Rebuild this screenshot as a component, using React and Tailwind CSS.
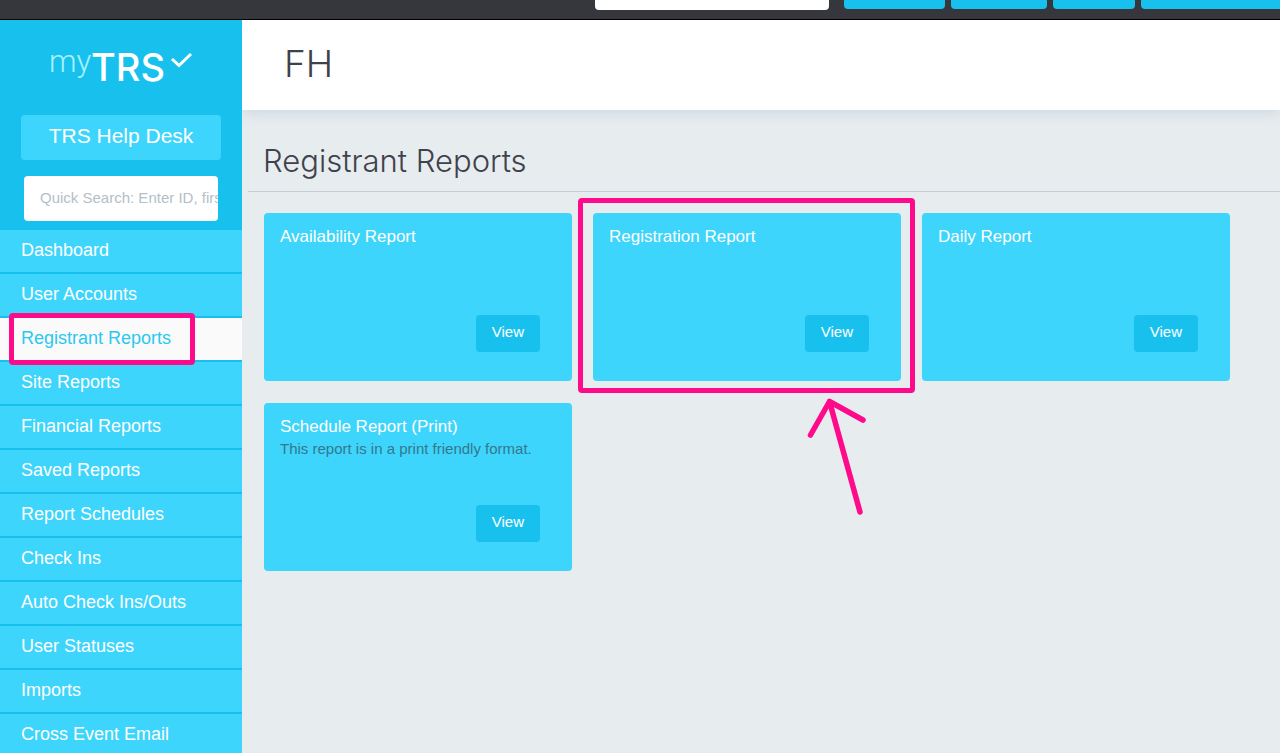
import React, { useState } from 'react';

const navItems = [
  'Dashboard',
  'User Accounts',
  'Registrant Reports',
  'Site Reports',
  'Financial Reports',
  'Saved Reports',
  'Report Schedules',
  'Check Ins',
  'Auto Check Ins/Outs',
  'User Statuses',
  'Imports',
  'Cross Event Email',
];

const reports = [
  { title: 'Availability Report' },
  { title: 'Registration Report', highlight: true },
  { title: 'Daily Report' },
  { title: 'Schedule Report (Print)', note: 'This report is in a print friendly format.' },
];

const Logo = () => (
  <svg width="150" height="60" viewBox="-2 -10 150 60" className="block" role="img" aria-label="myTRS">
    <text x="0" y="26" fill="#a9f0ff" fontSize="31" fontWeight="300" fontFamily="Roboto, sans-serif">my</text>
    <text x="42" y="35" fill="#fff" fontSize="38" fontWeight="500" fontFamily="Inter, sans-serif">TRS</text>
    <path d="M123 13 L130 19.5 L142 8" fill="none" stroke="#fff" strokeWidth="3" />
  </svg>
);

const TopBar = () => (
  <header className="flex h-5 shrink-0 items-start justify-end border-b border-black bg-[#36363d]">
    <input type="text" aria-label="Search" className="mr-[15px] h-[10px] w-[234px] rounded-b bg-white outline-none" />
    <div className="flex gap-1.5">
      <button type="button" aria-label="Events" className="h-[9px] w-[101px] rounded-b bg-[#18c1ed]" />
      <button type="button" aria-label="Reports" className="h-[9px] w-24 rounded-b bg-[#18c1ed]" />
      <button type="button" aria-label="Help" className="h-[9px] w-[82px] rounded-b bg-[#18c1ed]" />
      <button type="button" aria-label="Account" className="h-[9px] w-[139px] rounded-bl bg-[#18c1ed]" />
    </div>
  </header>
);

const Sidebar = ({ active, onSelect }) => (
  <aside className="w-[242px] shrink-0 overflow-hidden bg-[#18c1ed]">
    <div className="flex h-[210px] flex-col px-[21px] pt-4">
      <div className="ml-[26px]">
        <Logo />
      </div>
      <button type="button" className="mt-[19px] h-[45px] shrink-0 rounded bg-[#3dd5fb] pb-1 text-[21px] text-white">
        TRS Help Desk
      </button>
      <input
        type="text"
        aria-label="Quick Search"
        placeholder="Quick Search: Enter ID, first or last name"
        className="mx-[3px] mt-4 h-[45px] shrink-0 rounded bg-white pb-0.5 pl-4 text-[15px] text-gray-700 outline-none placeholder:text-[#b3c0c8]"
      />
    </div>
    <nav>
      <ul>
        {navItems.map(item => (
          <li key={item} className="relative">
            <a
              href="#"
              onClick={e => { e.preventDefault(); onSelect(item); }}
              className={`flex h-11 items-center border-b-2 border-[#18c1ed] pl-[21px] pb-0.5 text-lg ${
                item === active ? 'bg-[#fafafa] text-[#2bc8f0]' : 'bg-[#3dd5fb] text-white'
              }`}
            >
              {item}
            </a>
            {item === 'Registrant Reports' && (
              <div className="pointer-events-none absolute -top-[5px] left-[9px] z-10 h-[52px] w-[186px] rounded-sm border-[5px] border-[#ff0a8a]" />
            )}
          </li>
        ))}
      </ul>
    </nav>
  </aside>
);

const ReportCard = ({ title, note, highlight }) => (
  <article className="relative flex min-h-[168px] flex-col rounded bg-[#3dd5fb] px-4 pt-3 pb-[29px]">
    <h3 className="text-[17px] leading-6 text-white">{title}</h3>
    {note && <p className="text-[15px] leading-5 text-[#34788d]">{note}</p>}
    <button type="button" className="mt-auto mr-4 h-[37px] self-end rounded bg-[#18c1ed] px-4 pb-0.5 text-[15px] text-white">
      View
    </button>
    {highlight && (
      <>
        <div className="pointer-events-none absolute -top-[15px] -right-[14px] -bottom-3 -left-[15px] rounded-sm border-[5px] border-[#ff0a8a]" />
        <svg
          width="64" height="124" viewBox="0 0 64 124"
          className="pointer-events-none absolute top-[182px] left-[212px]"
          fill="none" stroke="#ff0a8a" strokeWidth="5.5" strokeLinecap="round" strokeLinejoin="round" aria-hidden="true"
        >
          <path d="M5.5 40 L24.5 6.5 L58 25 M24.5 6.5 L55 117" />
        </svg>
      </>
    )}
  </article>
);

const App = () => {
  const [active, setActive] = useState('Registrant Reports');

  return (
    <div className="flex h-screen flex-col overflow-hidden bg-[#e7ecef] font-['Liberation_Sans',Arial,sans-serif]">
      <TopBar />
      <div className="flex min-h-0 flex-1">
        <Sidebar active={active} onSelect={setActive} />
        <main className="min-w-0 flex-1 overflow-hidden">
          <div className="flex h-[90px] items-center bg-white pb-1 pl-[42px] shadow-[0_2px_14px_#c9d6dd]">
            <h1 className="font-[Inter,sans-serif] text-[37px] leading-none font-light text-[#3f424c]">FH</h1>
          </div>
          <div className="ml-1.5 border-b border-[#c3ced4] pt-[31px] pb-[10px] pl-[15px]">
            <h2 className="font-[Inter,sans-serif] text-[31px] leading-10 font-light text-[#3f424c]">Registrant Reports</h2>
          </div>
          <div className="grid grid-cols-3 gap-x-[21px] gap-y-[22px] pt-[21px] pr-[50px] pl-[22px]">
            {reports.map(report => <ReportCard key={report.title} {...report} />)}
          </div>
        </main>
      </div>
    </div>
  );
};

export default App;
